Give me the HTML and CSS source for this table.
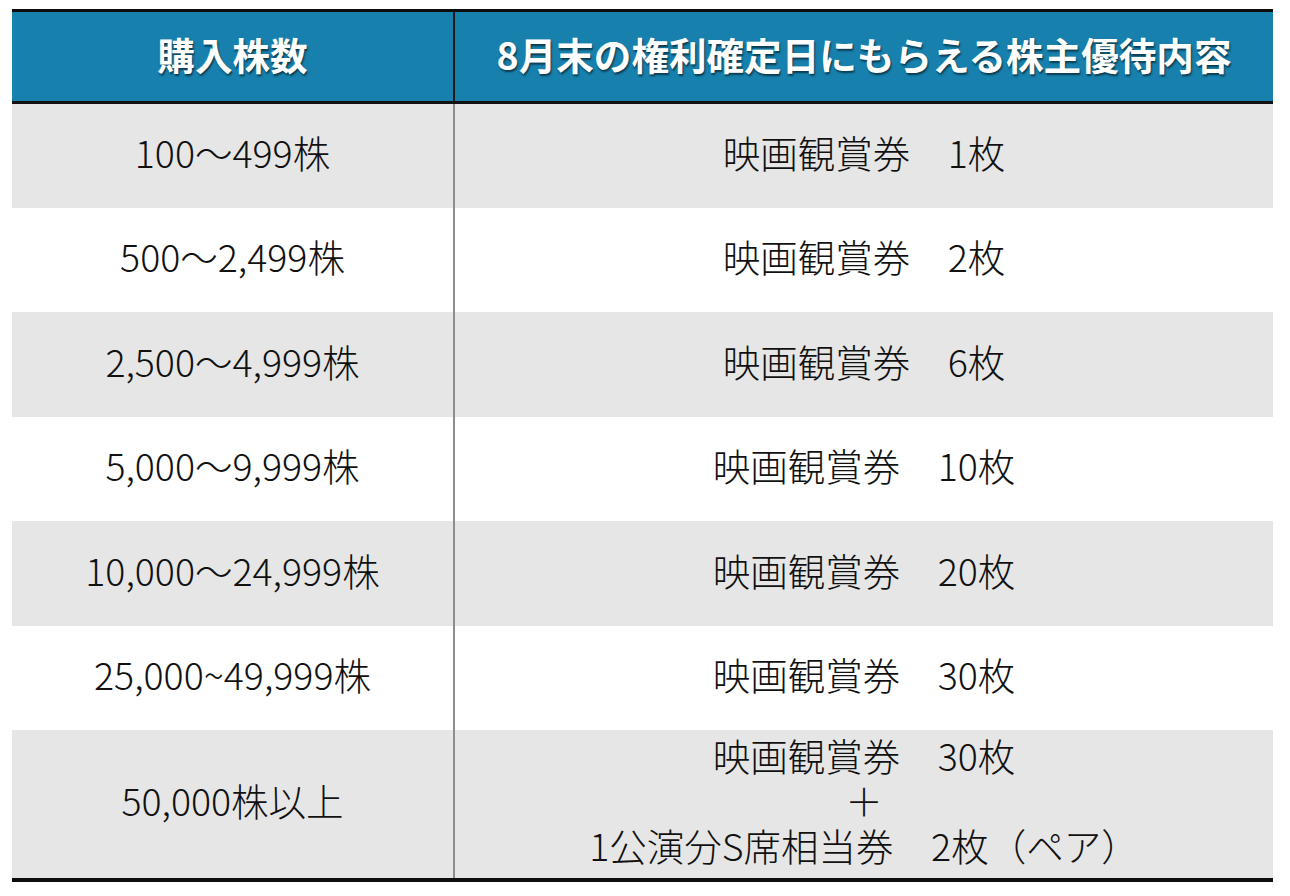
FILE: index.html
```html
<!DOCTYPE html>
<html lang="ja">
<head>
<meta charset="utf-8">
<title>株主優待</title>
<link rel="stylesheet" href="styles.css">
</head>
<body>
<div class="table">
  <div class="row head">
    <div class="cell left">購入株数</div>
    <div class="cell right">8月末の権利確定日にもらえる株主優待内容</div>
  </div>
  <div class="row grey">
    <div class="cell left">100～499株</div>
    <div class="cell right">映画観賞券　1枚</div>
  </div>
  <div class="row">
    <div class="cell left">500～2,499株</div>
    <div class="cell right">映画観賞券　2枚</div>
  </div>
  <div class="row grey tall">
    <div class="cell left">2,500～4,999株</div>
    <div class="cell right">映画観賞券　6枚</div>
  </div>
  <div class="row">
    <div class="cell left">5,000～9,999株</div>
    <div class="cell right">映画観賞券　10枚</div>
  </div>
  <div class="row grey tall">
    <div class="cell left">10,000～24,999株</div>
    <div class="cell right">映画観賞券　20枚</div>
  </div>
  <div class="row">
    <div class="cell left">25,000~49,999株</div>
    <div class="cell right">映画観賞券　30枚</div>
  </div>
  <div class="row grey last">
    <div class="cell left">50,000株以上</div>
    <div class="cell right multi">
      <span class="line">映画観賞券　30枚</span>
      <span class="line">＋</span>
      <span class="line">1公演分S席相当券　2枚（ペア）</span>
    </div>
  </div>
</div>
</body>
</html>
```

FILE: styles.css
```css
html, body {
  margin: 0;
  padding: 0;
  background: #ffffff;
}

body {
  padding: 9px 17px 0 12px;
  font-family: "Noto Sans CJK JP", "Noto Sans", sans-serif;
  color: #111111;
}

.table {
  width: 1261px;
  border-top: 3px solid #0d0d0d;
  border-bottom: 4px solid #0d0d0d;
}

.row {
  display: grid;
  grid-template-columns: 441px 1fr;
  height: 104px;
  background: #ffffff;
}

.row.grey {
  background: #e6e6e6;
}

.row.tall {
  height: 105px;
}

.row.head {
  height: 89px;
  background: #1780ad;
  border-bottom: 3px solid #111111;
}

.row.last {
  height: 148px;
}

.cell {
  display: flex;
  align-items: center;
  justify-content: center;
  padding-bottom: 9px;
  font-size: 37.5px;
  font-weight: 300;
  line-height: 1.2;
  white-space: nowrap;
}

.cell.right {
  border-left: 2px solid #8e8e8e;
}

.head .cell {
  padding-bottom: 5px;
  color: #ffffff;
  font-weight: 700;
  font-size: 37.6px;
  text-shadow: 1px 2px 2px rgba(0, 0, 0, 0.55);
}

.head .cell.right {
  border-left-color: #1a1a1a;
}

.cell.multi {
  flex-direction: column;
  line-height: 45px;
}

.line {
  display: block;
  height: 45px;
}
```
